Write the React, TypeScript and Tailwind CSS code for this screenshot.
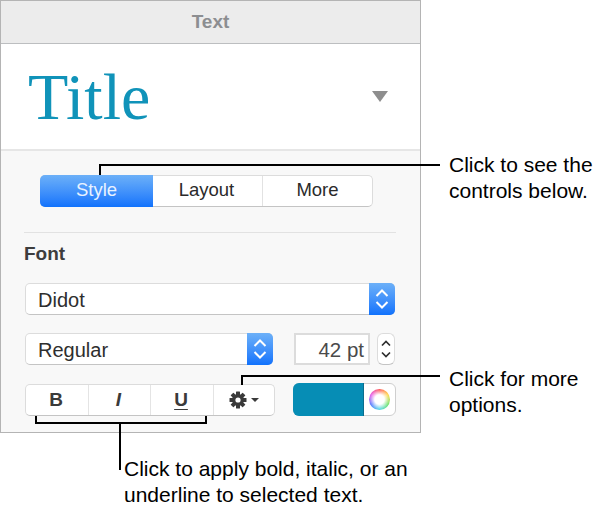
const sans = "font-['Liberation_Sans',Arial,sans-serif]";

function Updown({ small }: { small?: boolean }) {
  if (small) {
    return (
      <svg width="10" height="22" viewBox="0 0 10 22" fill="none" stroke="currentColor" strokeWidth="1.7">
        <path d="M1 7.5 5 3.5 9 7.5" />
        <path d="M1 14.5 5 18.5 9 14.5" />
      </svg>
    );
  }
  return (
    <svg width="14" height="22" viewBox="0 0 14 22" fill="none" stroke="currentColor" strokeWidth="2">
      <path d="M1.5 8 7 2.5 12.5 8" />
      <path d="M1.5 14 7 19.5 12.5 14" />
    </svg>
  );
}

function PopUp({ label, width }: { label: string; width: string }) {
  return (
    <div className={`flex h-[32px] items-stretch rounded-[5px] border border-[#dcdcdc] border-b-[#c4c4c4] bg-white ${width}`}>
      <div className="flex flex-1 items-center pt-[2px] pl-[12px] text-[20px] text-[#2e2e2e]">{label}</div>
      <div className="-my-px -mr-px flex w-[26px] items-center justify-center rounded-r-[5px] bg-gradient-to-b from-[#6cb0f8] to-[#0f72fc] text-white">
        <Updown />
      </div>
    </div>
  );
}

function Gear() {
  return (
    <svg width="18" height="18" viewBox="0 0 18 18" fill="#3a3a3a">
      <g transform="translate(9 9)">
        {[0, 45, 90, 135].map((a) => (
          <rect key={a} x="-2" y="-8.5" width="4" height="17" rx="0.5" transform={`rotate(${a})`} />
        ))}
        <circle r="6" />
        <circle r="2.6" fill="#fff" />
      </g>
    </svg>
  );
}

export default function App() {
  return (
    <div className={`relative h-[512px] w-[608px] overflow-hidden bg-white ${sans}`}>
      <div className="flex h-[433px] w-[421px] flex-col border border-[#b4b4b4] bg-[#f8f8f8]">
        <div className="flex h-[43px] items-center justify-center border-b border-[#bcbec0] bg-[#ececec] text-[19px] font-bold text-[#8c8e91]">
          Text
        </div>

        <div className="flex h-[107px] items-center justify-between border-b-2 border-[#e6e6e6] bg-white pr-[32px] pl-[27px]">
          <span className="font-['Liberation_Serif',serif] text-[66px] leading-none text-[#1093b9]">Title</span>
          <div className="h-0 w-0 border-x-[8.5px] border-t-[11px] border-x-transparent border-t-[#8e8e8e]" />
        </div>

        <div className="flex flex-1 flex-col px-[23px]">
          <div className="mt-[24px] ml-[16px] flex h-[32px] w-[333px] rounded-[5px] border border-[#dcdcdc] border-b-[#c4c4c4] bg-white text-[18.5px] text-[#2a2a2a]">
            <div className="-my-px -ml-px flex w-[113px] items-center justify-center rounded-l-[5px] bg-gradient-to-b from-[#6cb0f8] to-[#0f72fc] pb-[2px] text-[#e8f2ff]">
              Style
            </div>
            <div className="flex w-[110px] items-center justify-center border-r border-[#e2e2e2] pr-[2px] pb-[2px]">Layout</div>
            <div className="flex flex-1 items-center justify-center pb-[2px]">More</div>
          </div>

          <div className="mt-[25px] h-px w-[372px] bg-[#e2e2e2]" />

          <div className="mt-[10px] text-[19px] leading-[21px] font-bold text-[#3d3d3d]">Font</div>

          <div className="mt-[19px] ml-px">
            <PopUp label="Didot" width="w-[370px]" />
          </div>

          <div className="mt-[18px] ml-px flex items-center">
            <PopUp label="Regular" width="w-[248px]" />
            <div className="ml-[21px] flex h-[32px] w-[76px] items-center justify-end border-2 border-[#dcdcdc] bg-white pt-[2px] pr-[4px] text-[20.5px] text-[#4a4a4a]">
              42 pt
            </div>
            <div className="ml-[7px] flex h-[32px] w-[18px] items-center justify-center rounded-[6px] border border-[#dcdcdc] border-b-[#c4c4c4] bg-white text-[#2e2e2e]">
              <Updown small />
            </div>
          </div>

          <div className="mt-[19px] ml-px flex items-center">
            <div className="flex h-[32px] w-[250px] rounded-[5px] border border-[#dcdcdc] border-b-[#c4c4c4] bg-white text-[#3a3a3a]">
              <div className="flex w-[63px] items-center justify-center border-r border-[#e4e4e4] pr-[2px] text-[19px] font-bold">B</div>
              <div className="flex w-[62px] items-center justify-center border-r border-[#e4e4e4] pr-[2px] text-[19px] font-bold italic">I</div>
              <div className="flex w-[63px] items-center justify-center border-r border-[#e4e4e4] pr-[2px] text-[19px] font-bold underline underline-offset-[3px]">U</div>
              <div className="flex flex-1 items-center justify-center gap-[4px]">
                <Gear />
                <div className="h-0 w-0 border-x-[4px] border-t-[4px] border-x-transparent border-t-[#3a3a3a]" />
              </div>
            </div>
            <div className="-mt-px ml-[18px] flex h-[33px] w-[103px] rounded-[6px] border border-[#cfcfcf] bg-white">
              <div className="-my-px -ml-px w-[71px] rounded-l-[6px] border-r border-[#0a6d8d] bg-[#068db5]" />
              <div className="flex flex-1 items-center justify-center">
                <div className="h-[21px] w-[21px] rounded-full bg-[radial-gradient(circle,#ffffff_32%,transparent_68%),conic-gradient(#ff5a5a,#ffd84a,#6fe36f,#55d8e8,#5a7bff,#e85ae8,#ff5a5a)]" />
              </div>
            </div>
          </div>
        </div>
      </div>

      {/* callout lines */}
      <div className="absolute top-[164px] left-[99px] h-[11px] w-[341px] border-t-2 border-l-2 border-black" />
      <div className="absolute top-[375px] left-[241px] h-[10px] w-[199px] border-t-2 border-l-2 border-black" />
      <div className="absolute top-[416px] left-[35px] h-[8px] w-[172px] border-r-2 border-b-2 border-l-2 border-black" />
      <div className="absolute top-[424px] left-[119px] h-[46px] w-[2px] bg-black" />

      {/* callout text */}
      <div className="absolute top-[152px] left-[449px] text-[21px] leading-[26px] text-black">
        Click to see the
        <br />
        controls below.
      </div>
      <div className="absolute top-[366px] left-[449px] text-[21px] leading-[26px] text-black">
        Click for more
        <br />
        options.
      </div>
      <div className="absolute top-[456px] left-[124px] text-[21px] leading-[26px] text-black">
        Click to apply bold, italic, or an
        <br />
        underline to selected text.
      </div>
    </div>
  );
}
